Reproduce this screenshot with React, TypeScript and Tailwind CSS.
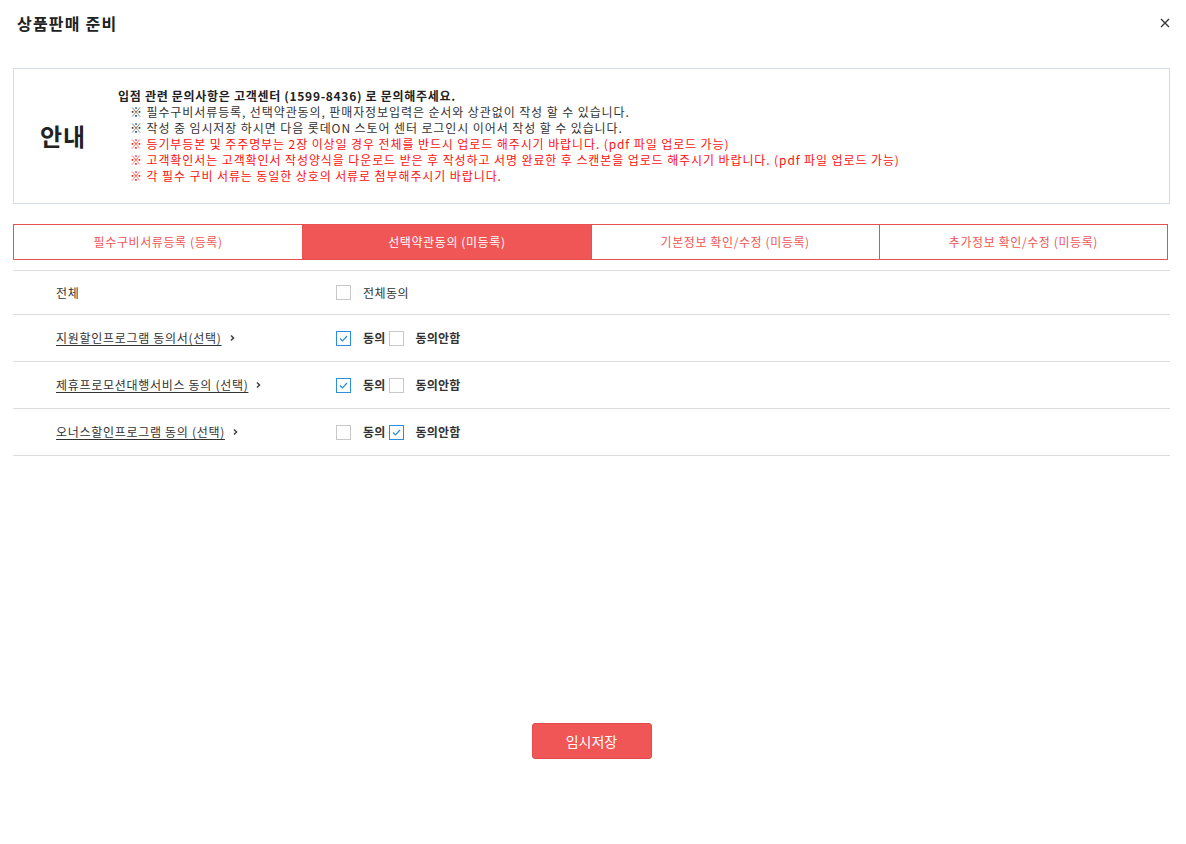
import { useState } from 'react';

const FONT = { fontFamily: '"Noto Sans CJK KR", "Noto Sans", sans-serif' };

const tabs = [
  '필수구비서류등록 (등록)',
  '선택약관동의 (미등록)',
  '기본정보 확인/수정 (미등록)',
  '추가정보 확인/수정 (미등록)',
];

const notices: { text: string; red?: boolean }[] = [
  { text: '※ 필수구비서류등록, 선택약관동의, 판매자정보입력은 순서와 상관없이 작성 할 수 있습니다.' },
  { text: '※ 작성 중 임시저장 하시면 다음 롯데ON 스토어 센터 로그인시 이어서 작성 할 수 있습니다.' },
  { text: '※ 등기부등본 및 주주명부는 2장 이상일 경우 전체를 반드시 업로드 해주시기 바랍니다. (pdf 파일 업로드 가능)', red: true },
  {
    text: '※ 고객확인서는 고객확인서 작성양식을 다운로드 받은 후 작성하고 서명 완료한 후 스캔본을 업로드 해주시기 바랍니다. (pdf 파일 업로드 가능)',
    red: true,
  },
  { text: '※ 각 필수 구비 서류는 동일한 상호의 서류로 첨부해주시기 바랍니다.', red: true },
];

function Checkbox({ checked, onClick }: { checked: boolean; onClick: () => void }) {
  return (
    <button
      onClick={onClick}
      className={`w-[15px] h-[15px] border flex items-center justify-center bg-white ${
        checked ? 'border-[#2a8fe0]' : 'border-[#c8c8c8]'
      }`}
    >
      {checked && (
        <svg width="9" height="7" viewBox="0 0 9 7" fill="none">
          <path d="M1 3.5 L3.5 6 L8 1" stroke="#2a8fe0" strokeWidth="1.2" />
        </svg>
      )}
    </button>
  );
}

export default function App() {
  const [active, setActive] = useState(1);
  const [agree, setAgree] = useState<(boolean | null)[]>([true, true, false]);

  const terms = ['지원할인프로그램 동의서(선택)', '제휴프로모션대행서비스 동의 (선택)', '오너스할인프로그램 동의 (선택)'];
  const allAgreed = agree.every((a) => a === true);

  return (
    <div className="w-[1186px] h-[844px] bg-white text-[#333] relative" style={FONT}>
      <div className="flex items-center justify-between h-[46px] pl-[17px] pr-[16px]">
        <h1 className="text-[16px] font-semibold tracking-[1.2px] text-[#222]">상품판매 준비</h1>
        <button aria-label="닫기" className="text-[#333]">
          <svg width="10" height="10" viewBox="0 0 10 10">
            <path d="M1 1 L9 9 M9 1 L1 9" stroke="#333" strokeWidth="1.3" />
          </svg>
        </button>
      </div>

      <div className="px-[13px] pr-[16px] pt-[22px]">
        <div className="flex border border-[#d5dbe3] h-[136px]">
          <div className="w-[96px] flex items-center justify-center pl-[2px]">
            <span className="text-[24px] font-bold tracking-[1px] text-[#222] leading-none">안내</span>
          </div>
          <div className="flex flex-col justify-center pl-[8px] text-[12px] leading-[16px]">
            <p className="font-bold text-[#222] tracking-[0.7px]">입점 관련 문의사항은 고객센터 (1599-8436) 로 문의해주세요.</p>
            {notices.map((n) => (
              <p key={n.text} className={`pl-[12px] tracking-[0.9px] ${n.red ? 'text-[#ff1010]' : 'text-[#333]'}`}>
                {n.text}
              </p>
            ))}
          </div>
        </div>

        <div className="grid grid-cols-4 w-[1155px] mt-[20px] border border-[#e85050] h-[36px]">
          {tabs.map((t, i) => (
            <button
              key={t}
              onClick={() => setActive(i)}
              className={`text-[12px] tracking-[0.6px] flex items-center justify-center ${
                i > 0 ? 'border-l border-[#e85050]' : ''
              } ${i === active ? 'bg-[#f05656] text-white' : 'bg-white text-[#f05656]'}`}
            >
              {t}
            </button>
          ))}
        </div>

        <div className="mt-[10px] border-t border-[#dcdcdc] text-[12px]">
          <div className="flex items-center h-[44px] border-b border-[#dcdcdc]">
            <div className="w-[323px] pl-[43px] tracking-[0.7px]">전체</div>
            <div className="flex items-center gap-[12px]">
              <Checkbox checked={allAgreed} onClick={() => setAgree(agree.map(() => !allAgreed))} />
              <span className="tracking-[0.5px]">전체동의</span>
            </div>
          </div>
          {terms.map((t, i) => (
            <div key={t} className="flex items-center h-[47px] border-b border-[#dcdcdc]">
              <div className="w-[323px] pl-[43px] flex items-center gap-[8px]">
                <span className="underline underline-offset-2 tracking-[0.7px]">{t}</span>
                <svg width="5" height="8" viewBox="0 0 5 8">
                  <path d="M1 1.5 L3.5 4 L1 6.5" stroke="#444" strokeWidth="1.6" fill="none" />
                </svg>
              </div>
              <div className="flex items-center font-bold tracking-[0.2px]">
                <Checkbox
                  checked={agree[i] === true}
                  onClick={() => setAgree(agree.map((a, j) => (j === i ? true : a)))}
                />
                <span className="ml-[12px] mr-[4px]">동의</span>
                <Checkbox
                  checked={agree[i] === false}
                  onClick={() => setAgree(agree.map((a, j) => (j === i ? false : a)))}
                />
                <span className="ml-[11px]">동의안함</span>
              </div>
            </div>
          ))}
        </div>

        <div className="flex justify-center mt-[267px]">
          <button className="w-[120px] h-[36px] rounded-[3px] bg-[#f05656] border border-[#e04a4a] text-white text-[14px]">
            임시저장
          </button>
        </div>
      </div>
    </div>
  );
}
